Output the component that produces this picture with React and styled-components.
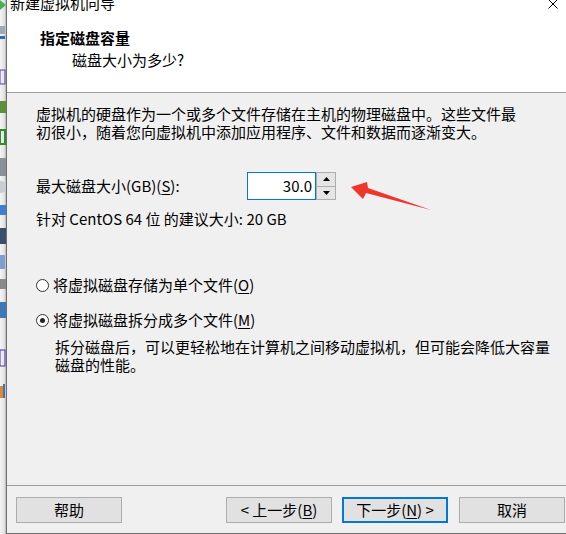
import styled, { createGlobalStyle } from "styled-components";

const GlobalStyle = createGlobalStyle`
  html, body {
    margin: 0;
    padding: 0;
    background: #f0f0f0;
  }
  body {
    font-family: "Noto Sans CJK SC", "Microsoft YaHei", sans-serif;
    font-size: 15px;
    color: #000;
  }
`;

const Page = styled.div`
  display: flex;
  width: 566px;
  height: 534px;
  overflow: hidden;
`;

const BackStrip = styled.div`
  width: 6px;
  flex-shrink: 0;
  background: linear-gradient(to right, #f4f4f4 0%, #e4e4e4 70%, #b8b8b8 100%);
`;

const Dialog = styled.div`
  flex: 1;
  display: flex;
  flex-direction: column;
  border-left: 1px solid #6e6e6e;
  border-bottom: 1px solid #6e6e6e;
  background: #f0f0f0;
  box-sizing: border-box;
  height: 534px;
`;

const Header = styled.div`
  height: 93px;
  box-sizing: border-box;
  background: #fff;
  border-bottom: 1px solid #a0a0a0;
`;

const TitleBar = styled.div`
  height: 12px;
  display: flex;
  align-items: flex-end;
  justify-content: space-between;
  padding: 0 6px 0 3px;
  overflow: hidden;
`;

const TitleText = styled.span`
  line-height: 20px;
  font-size: 15px;
  margin-bottom: -1px;
`;

const CloseIcon = styled.svg`
  width: 10px;
  height: 10px;
  align-self: flex-start;
  margin-top: -1px;
  margin-right: 2px;
`;

const HeaderTitle = styled.div`
  margin: 17px 0 0 33px;
  font-weight: bold;
  line-height: 18px;
`;

const HeaderSub = styled.div`
  margin: 4px 0 0 65px;
  line-height: 18px;
`;

const Body = styled.div`
  flex: 1;
  padding-left: 29px;
  line-height: 18px;
`;

const Paragraph = styled.p`
  margin: ${({ $top }) => $top || 0}px 0 0 ${({ $indent }) => $indent || 0}px;
  line-height: 18px;
`;

const SizeRow = styled.div`
  position: relative;
  display: flex;
  align-items: center;
  height: 28px;
  margin-top: 31px;
`;

const FieldLabel = styled.label`
  width: 211px;
`;

const Spin = styled.div`
  display: flex;
  height: 28px;
`;

const NumberBox = styled.div`
  width: 69px;
  height: 28px;
  box-sizing: border-box;
  border: 1px solid #0078d7;
  background: #fff;
  text-align: right;
  padding-right: 3px;
  line-height: 26px;
`;

const SpinButtons = styled.div`
  display: flex;
  flex-direction: column;
  width: 20px;
`;

const SpinButton = styled.div`
  flex: 1;
  box-sizing: border-box;
  border: 1px solid #adadad;
  border-top-width: ${({ $down }) => ($down ? 0 : 1)}px;
  background: #e5e5e5;
  display: flex;
  align-items: center;
  justify-content: center;
`;

const ArrowMark = styled.svg`
  position: absolute;
  left: 309px;
  top: -4px;
  width: 90px;
  height: 46px;
`;

const Underline = styled.span`
  text-decoration: underline;
  text-underline-offset: 2px;
`;

const RadioRow = styled.label`
  display: flex;
  align-items: center;
  margin-top: ${({ $top }) => $top}px;
  height: 18px;
`;

const RadioDot = styled.span`
  width: 13px;
  height: 13px;
  box-sizing: border-box;
  border: 1px solid #333;
  border-radius: 50%;
  background: #fff;
  margin: 0 4px 0 0;
  display: flex;
  align-items: center;
  justify-content: center;

  &::after {
    content: "";
    width: 5px;
    height: 5px;
    border-radius: 50%;
    background: #222;
    display: ${({ $checked }) => ($checked ? "block" : "none")};
  }
`;

const Footer = styled.div`
  height: 48px;
  box-sizing: border-box;
  border-top: 1px solid #a0a0a0;
  display: flex;
  align-items: flex-start;
  padding: 11px 0 0 9px;
`;

const Button = styled.button`
  width: 106px;
  height: 26px;
  box-sizing: border-box;
  margin-left: ${({ $gap }) => $gap || 0}px;
  border: ${({ $default }) => ($default ? "2px solid #0078d7" : "1px solid #adadad")};
  background: #e1e1e1;
  font-family: inherit;
  font-size: 15px;
  color: #000;
  padding: 0;
  line-height: 22px;
`;

const StripIcons = () => (
  <svg width="6" height="534" style={{ display: "block" }}>
    <polygon points="0,0 6,5 0,10" fill="#4caf50" />
    <rect x="0" y="26" width="5" height="8" fill="#a0a8b4" />
    <rect x="0" y="36" width="5" height="3" fill="#2d6cc0" />
    <rect x="0" y="70" width="5" height="14" fill="none" stroke="#5a3cb0" strokeWidth="1" />
    <rect x="0" y="101" width="6" height="12" fill="#5c8f3a" />
    <rect x="0" y="130" width="5" height="14" fill="none" stroke="#2e8b2e" strokeWidth="2" />
    <rect x="0" y="158" width="6" height="18" fill="#8a9099" />
    <circle cx="1" cy="187" r="6" fill="#c9ccd1" />
    <rect x="0" y="205" width="6" height="10" fill="#3f7fd0" />
    <rect x="0" y="228" width="6" height="16" fill="#3c4f6a" />
    <rect x="0" y="255" width="5" height="14" fill="#7d9fd0" />
    <rect x="0" y="279" width="6" height="10" fill="#8a8a8a" />
    <rect x="0" y="302" width="6" height="16" fill="#3e78b8" />
    <rect x="0" y="350" width="5" height="16" fill="none" stroke="#4b2fb0" strokeWidth="1" />
    <rect x="0" y="386" width="3" height="12" fill="#e08a2c" />
    <rect x="3" y="384" width="2" height="14" fill="#3d6fcc" />
  </svg>
);

export default function App() {
  return (
    <>
      <GlobalStyle />
      <Page>
        <BackStrip>
          <StripIcons />
        </BackStrip>
        <Dialog>
          <Header>
            <TitleBar>
              <TitleText>新建虚拟机向导</TitleText>
              <CloseIcon viewBox="0 0 10 10">
                <path d="M0.5 0.5 L9.5 9.5 M9.5 0.5 L0.5 9.5" stroke="#000" strokeWidth="1" />
              </CloseIcon>
            </TitleBar>
            <HeaderTitle>指定磁盘容量</HeaderTitle>
            <HeaderSub>磁盘大小为多少?</HeaderSub>
          </Header>
          <Body>
            <Paragraph $top={12}>
              虚拟机的硬盘作为一个或多个文件存储在主机的物理磁盘中。这些文件最
              <br />
              初很小，随着您向虚拟机中添加应用程序、文件和数据而逐渐变大。
            </Paragraph>
            <SizeRow>
              <FieldLabel>
                最大磁盘大小(GB)(<Underline>S</Underline>):
              </FieldLabel>
              <Spin>
                <NumberBox>30.0</NumberBox>
                <SpinButtons>
                  <SpinButton>
                    <svg width="7" height="4" viewBox="0 0 7 4">
                      <polygon points="3.5,0 7,4 0,4" fill="#000" />
                    </svg>
                  </SpinButton>
                  <SpinButton $down>
                    <svg width="7" height="4" viewBox="0 0 7 4">
                      <polygon points="0,0 7,0 3.5,4" fill="#000" />
                    </svg>
                  </SpinButton>
                </SpinButtons>
              </Spin>
              <ArrowMark viewBox="0 0 90 46">
                <polygon
                  points="6,19 22,14 23,20 86,42 21,25 18,31"
                  fill="#f0352a"
                />
              </ArrowMark>
            </SizeRow>
            <Paragraph $top={10}>针对 CentOS 64 位 的建议大小: 20 GB</Paragraph>
            <RadioRow $top={48}>
              <RadioDot />
              将虚拟磁盘存储为单个文件(<Underline>O</Underline>)
            </RadioRow>
            <RadioRow $top={17}>
              <RadioDot $checked />
              将虚拟磁盘拆分成多个文件(<Underline>M</Underline>)
            </RadioRow>
            <Paragraph $top={9} $indent={19}>
              拆分磁盘后，可以更轻松地在计算机之间移动虚拟机，但可能会降低大容量
              <br />
              磁盘的性能。
            </Paragraph>
          </Body>
          <Footer>
            <Button>帮助</Button>
            <Button $gap={104}>
              &lt; 上一步(<Underline>B</Underline>)
            </Button>
            <Button $gap={10} $default>
              下一步(<Underline>N</Underline>) &gt;
            </Button>
            <Button $gap={11}>取消</Button>
          </Footer>
        </Dialog>
      </Page>
    </>
  );
}
